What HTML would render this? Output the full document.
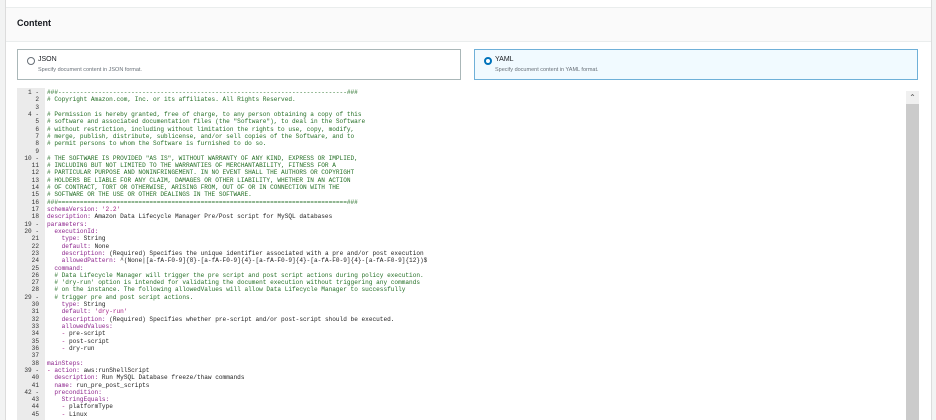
<!DOCTYPE html><html><head><style>
body{margin:0;width:936px;height:420px;overflow:hidden;background:#f2f3f3;font-family:"Liberation Sans",sans-serif}
.panel{position:absolute;left:5px;top:0;width:925px;height:420px;background:#fff;border-left:1px solid #dcdcdc;border-right:1px solid #dcdcdc}
.hdr{position:absolute;left:0;top:7px;width:925px;height:33px;background:#fafafa;border-top:1px solid #eaeded;border-bottom:1px solid #eaeded}
.hdr b{position:absolute;left:11px;top:10px;font-size:9px;color:#16191f}
.card{position:absolute;top:49px;width:444px;height:31px;border:1px solid #aab7b8;box-sizing:border-box}
.card .t{position:absolute;left:20px;top:6px;font-size:7px;color:#16191f}
.card .d{position:absolute;left:20px;top:17px;font-size:5.5px;color:#687078}
.rad{position:absolute;left:9px;top:7px;width:6px;height:6px;border-radius:50%;border:1px solid #687078}
.gut{position:absolute;left:11px;top:88px;width:28px;height:332px;background:#ebebeb}
.code{position:absolute;left:11px;top:89px;font-family:"Liberation Mono",monospace;font-size:6.1px;line-height:7.32px;white-space:pre;color:#222}
.n{display:inline-block;width:22px;text-align:right;color:#333;margin-right:8px}
.c{color:#236e24}.k{color:#8a1f8a}.s{color:#a21b80}
.sb{position:absolute;left:900px;top:91px;width:13px;height:329px;background:#cbcbcb}
.sb div{height:13px;background:#f0f0f0;text-align:center;font-size:8px;color:#555;line-height:14px}
</style></head><body>
<div class="panel">
<div class="hdr"><b>Content</b></div>
<div class="card" style="left:11px"><div class="rad"></div><div class="t">JSON</div><div class="d">Specify document content in JSON format.</div></div>
<div class="card" style="left:468px;background:#f1faff;border-color:#6fb0d8"><div class="rad" style="border:2px solid #0073bb;width:4px;height:4px;background:#fff"></div><div class="t">YAML</div><div class="d">Specify document content in YAML format.</div></div>
<div class="gut"></div>
<div class="code"><span class="n">1 -</span><span class="c">###-------------------------------------------------------------------------------###</span>
<span class="n">2</span><span class="c"># Copyright Amazon.com, Inc. or its affiliates. All Rights Reserved.</span>
<span class="n">3</span>
<span class="n">4 -</span><span class="c"># Permission is hereby granted, free of charge, to any person obtaining a copy of this</span>
<span class="n">5</span><span class="c"># software and associated documentation files (the "Software"), to deal in the Software</span>
<span class="n">6</span><span class="c"># without restriction, including without limitation the rights to use, copy, modify,</span>
<span class="n">7</span><span class="c"># merge, publish, distribute, sublicense, and/or sell copies of the Software, and to</span>
<span class="n">8</span><span class="c"># permit persons to whom the Software is furnished to do so.</span>
<span class="n">9</span>
<span class="n">10 -</span><span class="c"># THE SOFTWARE IS PROVIDED "AS IS", WITHOUT WARRANTY OF ANY KIND, EXPRESS OR IMPLIED,</span>
<span class="n">11</span><span class="c"># INCLUDING BUT NOT LIMITED TO THE WARRANTIES OF MERCHANTABILITY, FITNESS FOR A</span>
<span class="n">12</span><span class="c"># PARTICULAR PURPOSE AND NONINFRINGEMENT. IN NO EVENT SHALL THE AUTHORS OR COPYRIGHT</span>
<span class="n">13</span><span class="c"># HOLDERS BE LIABLE FOR ANY CLAIM, DAMAGES OR OTHER LIABILITY, WHETHER IN AN ACTION</span>
<span class="n">14</span><span class="c"># OF CONTRACT, TORT OR OTHERWISE, ARISING FROM, OUT OF OR IN CONNECTION WITH THE</span>
<span class="n">15</span><span class="c"># SOFTWARE OR THE USE OR OTHER DEALINGS IN THE SOFTWARE.</span>
<span class="n">16</span><span class="c">###===============================================================================###</span>
<span class="n">17</span><span class="k">schemaVersion:</span> <span class="s">'2.2'</span>
<span class="n">18</span><span class="k">description:</span> Amazon Data Lifecycle Manager Pre/Post script for MySQL databases
<span class="n">19 -</span><span class="k">parameters:</span>
<span class="n">20 -</span>  <span class="k">executionId:</span>
<span class="n">21</span>    <span class="k">type:</span> String
<span class="n">22</span>    <span class="k">default:</span> None
<span class="n">23</span>    <span class="k">description:</span> (Required) Specifies the unique identifier associated with a pre and/or post execution
<span class="n">24</span>    <span class="k">allowedPattern:</span> ^(None|[a-fA-F0-9]{8}-[a-fA-F0-9]{4}-[a-fA-F0-9]{4}-[a-fA-F0-9]{4}-[a-fA-F0-9]{12})$
<span class="n">25</span>  <span class="k">command:</span>
<span class="n">26</span>  <span class="c"># Data Lifecycle Manager will trigger the pre script and post script actions during policy execution.</span>
<span class="n">27</span>  <span class="c"># 'dry-run' option is intended for validating the document execution without triggering any commands</span>
<span class="n">28</span>  <span class="c"># on the instance. The following allowedValues will allow Data Lifecycle Manager to successfully</span>
<span class="n">29 -</span>  <span class="c"># trigger pre and post script actions.</span>
<span class="n">30</span>    <span class="k">type:</span> String
<span class="n">31</span>    <span class="k">default:</span> <span class="s">'dry-run'</span>
<span class="n">32</span>    <span class="k">description:</span> (Required) Specifies whether pre-script and/or post-script should be executed.
<span class="n">33</span>    <span class="k">allowedValues:</span>
<span class="n">34</span>    <span class="s">-</span> pre-script
<span class="n">35</span>    <span class="s">-</span> post-script
<span class="n">36</span>    <span class="s">-</span> dry-run
<span class="n">37</span>
<span class="n">38</span><span class="k">mainSteps:</span>
<span class="n">39 -</span><span class="s">-</span> <span class="k">action:</span> aws:runShellScript
<span class="n">40</span>  <span class="k">description:</span> Run MySQL Database freeze/thaw commands
<span class="n">41</span>  <span class="k">name:</span> run_pre_post_scripts
<span class="n">42 -</span>  <span class="k">precondition:</span>
<span class="n">43</span>    <span class="k">StringEquals:</span>
<span class="n">44</span>    <span class="s">-</span> platformType
<span class="n">45</span>    <span class="s">-</span> Linux</div>
<div class="sb"><div>&#8963;</div></div>
</div>
</body></html>
